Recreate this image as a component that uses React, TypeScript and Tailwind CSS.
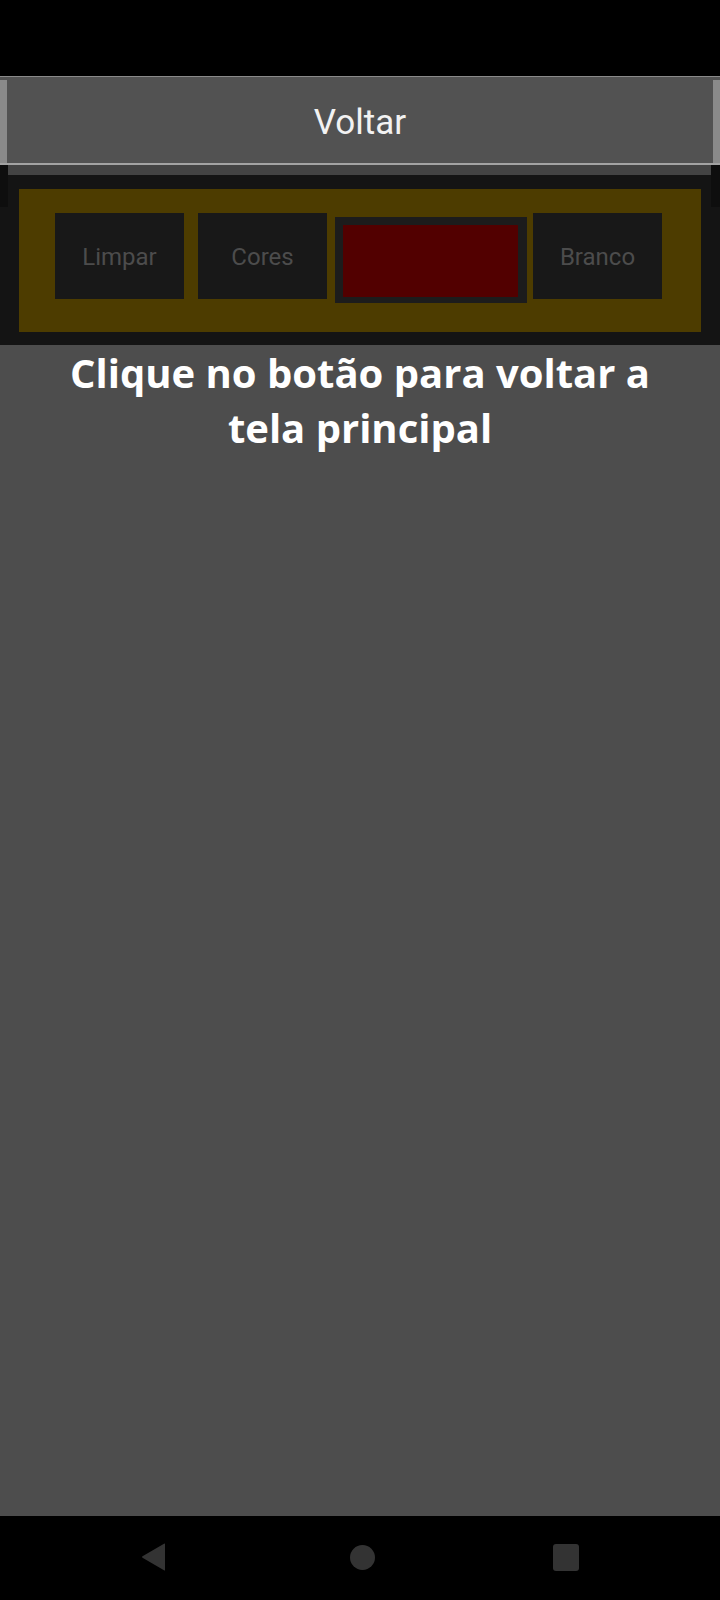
import React from "react";

function BarButton({ label }: { label: string }) {
  return (
    <div
      className="w-[129px] h-[86px] bg-[#181818] flex items-center justify-center text-[24px] text-[#4c4c4c] pt-[2px]"
      style={{ fontFamily: "Roboto, 'Liberation Sans', sans-serif" }}
    >
      {label}
    </div>
  );
}

export default function App() {
  return (
    <div className="w-[720px] h-[1600px] bg-[#4d4d4d] flex flex-col overflow-hidden">
      <div className="h-[76px] bg-black shrink-0" />
      {/* Voltar button */}
      <div className="h-[89px] shrink-0 flex border-t border-[#8a8a8a] border-b-2 border-b-[#a3a3a3] bg-[#525252]">
        <div className="w-[7px] mt-[3px] bg-[#8a8a8a]" />
        <div
          className="flex-1 flex items-center justify-center text-[35px] text-[#f2f2f2] pt-[6px]"
          style={{ fontFamily: "Roboto, 'Liberation Sans', sans-serif" }}
        >
          Voltar
        </div>
        <div className="w-[7px] mt-[3px] bg-[#8a8a8a]" />
      </div>
      <div className="h-[10px] shrink-0 flex bg-[#434343]">
        <div className="w-[8px] bg-[#0e0e0e]" />
        <div className="flex-1" />
        <div className="w-[9px] bg-[#0e0e0e]" />
      </div>
      {/* dark panel */}
      <div className="h-[170px] shrink-0 bg-[#141414] flex">
        <div className="w-[8px] flex flex-col">
          <div className="h-[32px] bg-[#0e0e0e]" />
        </div>
        <div className="flex-1 pt-[14px] pl-[11px] pr-[10px] pb-[13px]">
          <div className="h-full bg-[#4d3c00] flex items-start pt-[24px] pl-[36px]">
            <BarButton label="Limpar" />
            <div className="w-[14px]" />
            <BarButton label="Cores" />
            <div className="w-[8px]" />
            <div className="mt-[4px] w-[192px] h-[86px] bg-[#1c1c1c] pt-[8px] pl-[8px] pr-[9px] pb-[6px]">
              <div className="w-full h-full bg-[#520000]" />
            </div>
            <div className="w-[6px]" />
            <BarButton label="Branco" />
          </div>
        </div>
        <div className="w-[9px] flex flex-col">
          <div className="h-[32px] bg-[#0e0e0e]" />
        </div>
      </div>
      {/* heading */}
      <div
        className="text-center text-white font-bold text-[40px] leading-[55px] px-[20px]"
        style={{ fontFamily: "'Open Sans', 'Noto Sans', sans-serif" }}
      >
        Clique no botão para voltar a
        <br />
        tela principal
      </div>
      <div className="flex-1" />
      {/* nav bar */}
      <div className="h-[84px] shrink-0 bg-black flex items-center justify-between px-[141px] pb-[2px]">
        <svg width="25" height="28" viewBox="0 0 25 28">
          <path d="M24 1 L24 27 Q24 28 23 27.3 L1.5 14.8 Q0.5 14 1.5 13.2 L23 0.7 Q24 0 24 1 Z" fill="#333333" />
        </svg>
        <div className="w-[25px] h-[25px] rounded-full bg-[#333333] ml-[5px]" />
        <div className="w-[26px] h-[27px] rounded-[3px] bg-[#333333]" />
      </div>
    </div>
  );
}
